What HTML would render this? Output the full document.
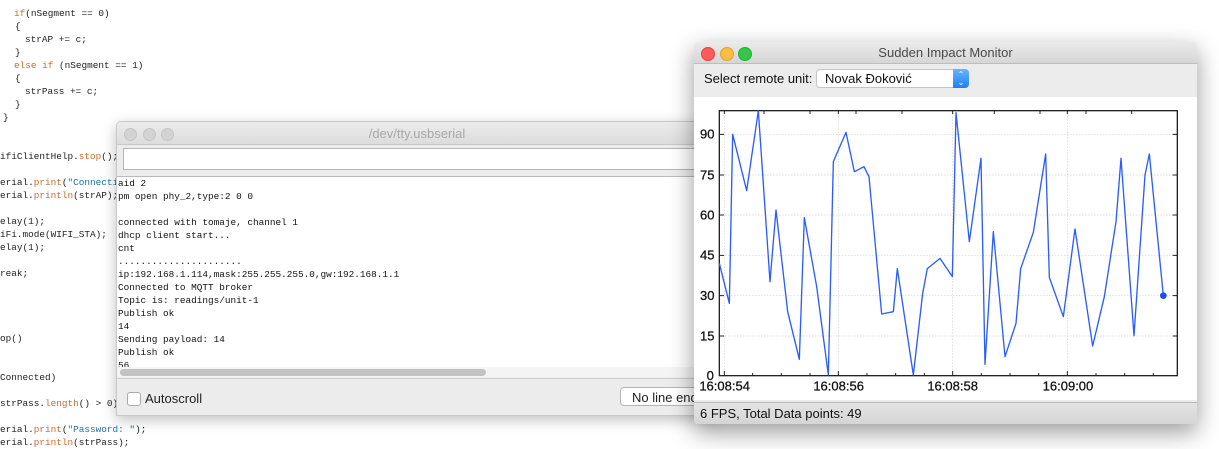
<!DOCTYPE html>
<html><head><meta charset="utf-8"><style>
body{margin:0;width:1219px;height:444px;overflow:hidden;background:#fff;position:relative;font-family:"Liberation Sans",sans-serif}
.code{position:absolute;left:0;top:7px;font-family:"Liberation Mono",monospace;font-size:9.4px;line-height:13px;color:#222}
.code div{height:13px;white-space:pre}
.k{color:#cc6a2e}.s{color:#1d6fa5}
.ser{position:absolute;left:116px;top:121px;width:600px;height:293px;background:#ececec;border:1px solid #c8c8c8;border-radius:5px 5px 0 0;box-shadow:0 4px 14px rgba(0,0,0,.25)}
.dot{position:absolute;top:6px;width:11px;height:11px;border-radius:50%;background:#d3d3d3;border:1px solid #c4c4c4}
.mon{position:absolute;left:694px;top:42px;width:503px;height:382px;background:#ececec;border-radius:5px 5px 3px 3px;box-shadow:0 8px 24px rgba(0,0,0,.4);overflow:hidden}
</style></head><body>
<div class="code"><div style="padding-left:14px"><span class="k">if</span>(nSegment == 0)</div><div style="padding-left:15px">{</div><div style="padding-left:25px">strAP += c;</div><div style="padding-left:15px">}</div><div style="padding-left:14px"><span class="k">else if</span> (nSegment == 1)</div><div style="padding-left:15px">{</div><div style="padding-left:25px">strPass += c;</div><div style="padding-left:15px">}</div><div style="padding-left:3px">}</div><div></div><div></div><div>ifiClientHelp.<span class="k">stop</span>();</div><div></div><div>erial.<span class="k">print</span>(<span class="s">"Connecting</span></div><div>erial.<span class="k">println</span>(strAP);</div><div></div><div>elay(1);</div><div>iFi.mode(WIFI_STA);</div><div>elay(1);</div><div></div><div>reak;</div><div></div><div></div><div></div><div></div><div>op()</div><div></div><div></div><div>Connected)</div><div></div><div>strPass.<span class="k">length</span>() &gt; 0)</div><div></div><div>erial.<span class="k">print</span>(<span class="s">"Password: "</span>);</div><div>erial.<span class="k">println</span>(strPass);</div></div>

<div class="ser">
 <div style="height:22px;background:linear-gradient(#ececec,#dcdcdc);border-bottom:1px solid #c8c8c8;border-radius:5px 5px 0 0;position:relative">
  <div class="dot" style="left:7px"></div><div class="dot" style="left:26px"></div><div class="dot" style="left:44px"></div>
  <div style="position:absolute;left:0;right:0;top:4px;text-align:center;font-size:13px;color:#a8a8a8">/dev/tty.usbserial</div>
 </div>
 <div style="position:absolute;left:6px;top:26px;width:600px;height:20px;background:#fff;border:1px solid #b5b5b5"></div>
 <div style="position:absolute;left:0;top:54px;width:600px;height:200px;background:#fff;border-top:1px solid #bbb;font-family:'Liberation Mono',monospace;font-size:9.4px;line-height:13px;white-space:pre;color:#111;overflow:hidden;padding-left:1px">aid 2
pm open phy_2,type:2 0 0

connected with tomaje, channel 1
dhcp client start...
cnt
......................
ip:192.168.1.114,mask:255.255.255.0,gw:192.168.1.1
Connected to MQTT broker
Topic is: readings/unit-1
Publish ok
14
Sending payload: 14
Publish ok
56</div>
 <div style="position:absolute;left:0;top:245px;width:600px;height:10px;background:#f4f4f4"></div>
 <div style="position:absolute;left:3px;top:247px;width:366px;height:7px;background:#c2c2c2;border-radius:4px"></div>
 <div style="position:absolute;left:0;top:256px;width:600px;height:1px;background:#cfcfcf"></div>
 <div style="position:absolute;left:10px;top:270px;width:12px;height:12px;border:1px solid #aaa;border-radius:3px;background:#fff"></div>
 <div style="position:absolute;left:28px;top:269px;font-size:13px;color:#222">Autoscroll</div>
 <div style="position:absolute;left:503px;top:265px;width:100px;height:19px;background:#fff;border:1px solid #b5b5b5;border-radius:4px;font-size:13px;padding:2px 0 0 11px;box-sizing:border-box;color:#222">No line ending</div>
</div>

<div class="mon">
 <div style="height:21px;background:linear-gradient(#ebebeb,#d6d6d6);border-bottom:1px solid #bdbdbd;position:relative">
  <div style="position:absolute;left:7px;top:5px;width:12px;height:12px;border-radius:50%;background:#fc5b57;border:0.5px solid #e0443e"></div>
  <div style="position:absolute;left:26px;top:5px;width:12px;height:12px;border-radius:50%;background:#fdbc40;border:0.5px solid #dea236"></div>
  <div style="position:absolute;left:44px;top:5px;width:12px;height:12px;border-radius:50%;background:#34c84a;border:0.5px solid #27aa35"></div>
  <div style="position:absolute;left:0;right:0;top:3px;text-align:center;font-size:13px;color:#4a4a4a">Sudden Impact Monitor</div>
 </div>
 <div style="position:absolute;left:10px;top:29px;font-size:13px;color:#111">Select remote unit:</div>
 <div style="position:absolute;left:122px;top:27px;width:153px;height:19px;background:#fff;border:1px solid #c4c4c4;border-radius:4px;box-sizing:border-box">
  <div style="position:absolute;left:8px;top:1px;font-size:13px;color:#111">Novak Đoković</div>
  <div style="position:absolute;right:-1px;top:-1px;width:16px;height:19px;background:linear-gradient(#6cb3fa,#1a82f7);border-radius:0 4px 4px 0;color:#fff;font-size:8px;line-height:8px;text-align:center;padding-top:2px;box-sizing:border-box">⌃<br>⌄</div>
 </div>
 <div style="position:absolute;left:0;top:55px;width:503px;height:303px;background:#fff"></div>
 <div style="position:absolute;left:0;top:360px;width:503px;height:22px;background:linear-gradient(#e4e4e4,#d4d4d4);border-top:1px solid #b8b8b8"></div>
 <div style="position:absolute;left:6px;top:364px;font-size:13px;color:#111">6 FPS, Total Data points: 49</div>
</div>

<svg style="position:absolute;left:690px;top:40px" width="529" height="404" viewBox="0 0 1587 1212">
 <g stroke="#bbb" stroke-width="2" stroke-dasharray="3,6">
  <line x1="88" y1="283" x2="1462" y2="283"/><line x1="88" y1="405" x2="1462" y2="405"/><line x1="88" y1="525" x2="1462" y2="525"/><line x1="88" y1="646" x2="1462" y2="646"/><line x1="88" y1="767" x2="1462" y2="767"/><line x1="88" y1="888" x2="1462" y2="888"/>
  <line x1="103" y1="212" x2="103" y2="1007"/><line x1="445" y1="212" x2="445" y2="1007"/><line x1="788" y1="212" x2="788" y2="1007"/><line x1="1132" y1="212" x2="1132" y2="1007"/>
 </g>
 <rect x="88" y="212" width="1374" height="795" fill="none" stroke="#222" stroke-width="4"/>
 <g stroke="#222" stroke-width="3">
  <path d="M103 1007v-14M445 1007v-14M788 1007v-14M1132 1007v-14M188 1007v-8M274 1007v-8M360 1007v-8M531 1007v-8M617 1007v-8M703 1007v-8M874 1007v-8M960 1007v-8M1046 1007v-8M1218 1007v-8M1304 1007v-8M1390 1007v-8"/>
  <path d="M88 283h14M88 405h14M88 525h14M88 646h14M88 767h14M88 888h14M1462 283h-14M1462 405h-14M1462 525h-14M1462 646h-14M1462 767h-14M1462 888h-14"/>
  <path d="M103 212v10M445 212v10M788 212v10M1132 212v10M1188 212v10M1325 212v10M1050 212v10M913 212v10M636 212v10M498 212v10M360 212v10M222 212v10"/>
 </g>
 <polyline fill="none" stroke="#2a5cff" stroke-width="4" stroke-linejoin="round" points="88,670 118,790 128,283 170,452 205,212 240,725 258,510 293,815 328,958 343,533 380,740 415,1005 430,365 468,277 493,395 522,380 537,410 575,822 610,815 622,686 670,1005 698,760 712,686 750,655 787,710 798,218 838,605 873,355 885,973 910,575 945,950 978,850 992,686 1030,577 1067,342 1078,712 1120,830 1155,567 1208,918 1243,770 1278,545 1293,355 1332,887 1365,405 1378,342 1420,767"/>
 <circle cx="1420" cy="767" r="10" fill="#1a4dff"/>
 <g font-family="Liberation Sans" font-size="39" fill="#111" stroke="#111" stroke-width="0.8">
  <text x="30" y="296">90</text><text x="30" y="418">75</text><text x="30" y="538">60</text><text x="30" y="659">45</text><text x="30" y="780">30</text><text x="30" y="901">15</text><text x="50" y="1020">0</text>
  <text x="28" y="1052">16:08:54</text><text x="370" y="1052">16:08:56</text><text x="712" y="1052">16:08:58</text><text x="1058" y="1052">16:09:00</text>
 </g>
</svg>
</body></html>
